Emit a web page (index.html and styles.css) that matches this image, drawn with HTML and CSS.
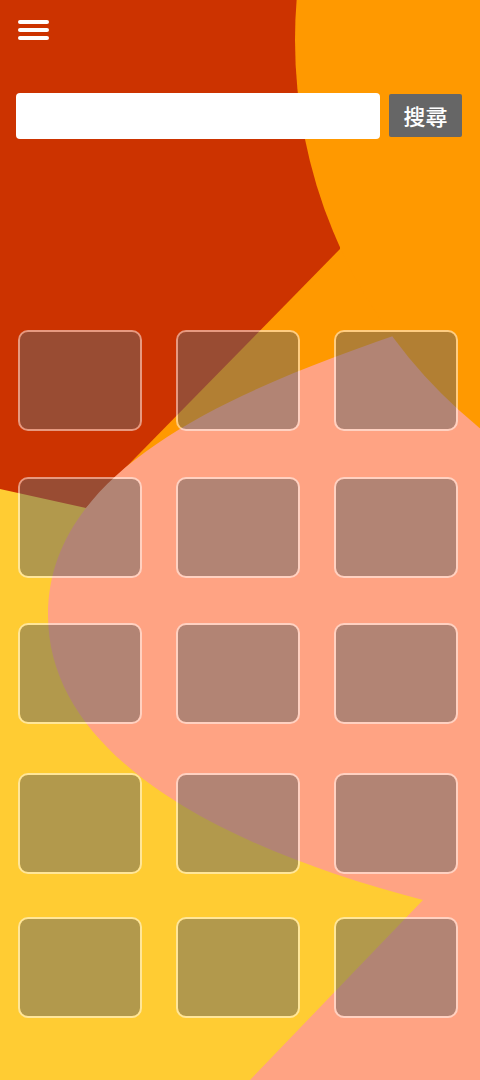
FILE: index.html
```html
<!DOCTYPE html>
<html lang="zh-Hant">
<head>
<meta charset="utf-8">
<title>搜尋</title>
<link rel="stylesheet" href="styles.css">
</head>
<body>
<div class="page">
  <svg class="bg" viewBox="0 0 480 1080" width="480" height="1080" aria-hidden="true">
    <rect width="480" height="1080" fill="#ffcc33"/>
    <polygon fill="#ff9900" points="300,0 480,0 480,700 250,700 95,505"/>
    <polygon fill="#cc3300" points="0,0 345,0 340,249 86,508 0,489"/>
    <path fill="#ffa383" d="M480,300 L420,327 C225,392 48,470 48,615 C48,760 230,850 423,900 L250,1080 L480,1080 Z"/>
    <circle cx="795" cy="40" r="500" fill="#ff9900"/>
  </svg>
  <div class="content">
    <header class="topbar">
      <button class="menu-btn" type="button" aria-label="選單">
        <span class="bar"></span>
        <span class="bar"></span>
        <span class="bar"></span>
      </button>
    </header>
    <form class="search">
      <input class="search-input" type="text" aria-label="搜尋">
      <button class="search-btn" type="button">搜尋</button>
    </form>
    <section class="tiles">
      <div class="tile"></div><div class="tile"></div><div class="tile"></div>
      <div class="tile"></div><div class="tile"></div><div class="tile"></div>
      <div class="tile"></div><div class="tile"></div><div class="tile"></div>
      <div class="tile"></div><div class="tile"></div><div class="tile"></div>
      <div class="tile"></div><div class="tile"></div><div class="tile"></div>
    </section>
  </div>
</div>
</body>
</html>
```

FILE: styles.css
```css
* {
  box-sizing: border-box;
}

html, body {
  margin: 0;
  padding: 0;
}

body {
  font-family: "Noto Sans CJK TC", "Noto Sans", sans-serif;
  background: #ffcc33;
}

.page {
  position: relative;
  width: 480px;
  height: 1080px;
  overflow: hidden;
}

.bg {
  position: absolute;
  top: 0;
  left: 0;
  display: block;
}

.content {
  position: relative;
}

.topbar {
  padding: 20px 0 0 18px;
  display: flex;
}

.menu-btn {
  display: flex;
  flex-direction: column;
  gap: 4px;
  width: 31px;
  padding: 0;
  margin: 0;
  border: none;
  background: transparent;
  cursor: pointer;
}

.bar {
  display: block;
  width: 31px;
  height: 4px;
  border-radius: 2px;
  background: #ffffff;
}

.search {
  display: flex;
  align-items: flex-start;
  gap: 9px;
  margin: 53px 0 0 0;
  padding-left: 16px;
}

.search-input {
  width: 364px;
  height: 46px;
  border: none;
  border-radius: 4px;
  background: #ffffff;
  margin: 0;
  padding: 0 10px;
  font-size: 16px;
  outline: none;
}

.search-btn {
  margin: 1px 0 0 0;
  width: 73px;
  height: 43px;
  border: none;
  border-radius: 2px;
  background: #666666;
  color: #ffffff;
  font-family: "Noto Sans CJK TC", "Noto Sans", sans-serif;
  font-size: 22px;
  font-weight: 500;
  line-height: 43px;
  padding: 0;
  letter-spacing: 0;
}

.tiles {
  display: grid;
  grid-template-columns: repeat(3, 124px);
  grid-template-rows: 147px 146px 150px 144px 101px;
  column-gap: 34px;
  margin-top: 191px;
  padding-left: 18px;
  align-items: start;
}

.tile {
  height: 101px;
  border: 2px solid rgba(255, 255, 255, 0.5);
  border-radius: 10px;
  background: rgba(102, 102, 102, 0.5);
  background-clip: padding-box;
}
```
